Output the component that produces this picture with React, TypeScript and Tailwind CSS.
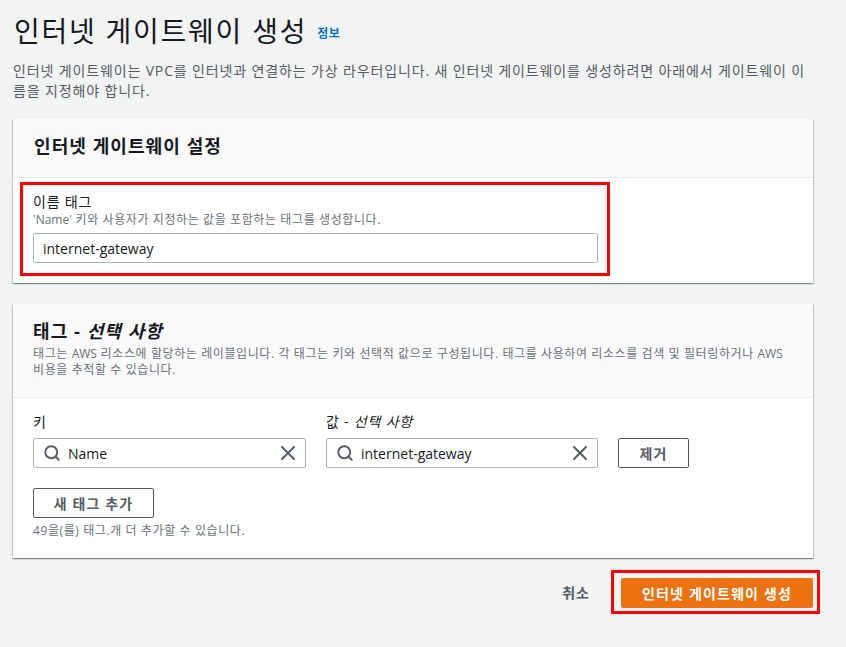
import React from 'react';
import { Search, X } from 'lucide-react';

const font = "font-['Open_Sans','Noto_Sans_CJK_KR',sans-serif]";

function TagInput({ value, className }: { value: string; className: string }) {
  return (
    <div className={`flex h-[30px] items-center rounded-[2px] border border-[#aab7b8] bg-white pl-[9px] pr-[5px] ${className}`}>
      <Search className="h-[18px] w-[18px] shrink-0 text-[#545b64]" strokeWidth={2.5} />
      <span className="ml-[7px] flex-1 text-[14px] text-[#16191f]">{value}</span>
      <X className="h-[24px] w-[24px] shrink-0 text-[#545b64]" strokeWidth={2} />
    </div>
  );
}

export default function App() {
  return (
    <div className={`${font} h-[647px] w-[846px] overflow-hidden bg-[#f2f3f3] pl-[13px]`}>
      <div className="w-[800px]">
        <div className="flex items-center pt-[11px]">
          <h1 className="ml-[1px] text-[28px] leading-[40px] font-normal tracking-[1.75px] text-[#16191f]">인터넷 게이트웨이 생성</h1>
          <a className="ml-[10px] mt-[6px] text-[12px] font-bold tracking-[0.5px] text-[#0073bb]">정보</a>
        </div>
        <p className="mt-[10px] text-[14px] leading-[20px] tracking-[0.86px] text-[#545b64]">
          인터넷 게이트웨이는 VPC를 인터넷과 연결하는 가상 라우터입니다. 새 인터넷 게이트웨이를 생성하려면 아래에서 게이트웨이 이름을 지정해야 합니다.
        </p>

        {/* Settings */}
        <section className="mt-[18px] h-[164px] bg-white shadow-[0_1px_1px_0_rgba(0,28,36,0.3),1px_1px_1px_0_rgba(0,28,36,0.15),-1px_1px_1px_0_rgba(0,28,36,0.15)]">
          <div className="flex h-[59px] items-center border-b border-[#eaeded] bg-[#fafafa] px-[21px] pb-[4px]">
            <h2 className="text-[18px] leading-[24px] font-bold tracking-[1.08px] text-[#16191f]">인터넷 게이트웨이 설정</h2>
          </div>
          <div className="ml-[7px] mt-[4px] h-[94px] w-[590px] border-[3px] border-[#ff0000] pl-[10px] pr-[9px] pt-[7px]">
            <div className="text-[14px] leading-[20px] tracking-[0.8px] text-[#16191f]">이름 태그</div>
            <div className="text-[12px] leading-[16px] tracking-[0.6px] text-[#687078]">
              <span className="tracking-normal">'Name'</span> 키와 사용자가 지정하는 값을 포함하는 태그를 생성합니다.
            </div>
            <div className="mt-[5px] flex h-[30px] items-center rounded-[2px] border border-[#aab7b8] bg-white px-[9px] text-[14px] text-[#16191f]">
              internet-gateway
            </div>
          </div>
        </section>

        {/* Tags */}
        <section className="mt-[21px] h-[254px] bg-white shadow-[0_1px_1px_0_rgba(0,28,36,0.3),1px_1px_1px_0_rgba(0,28,36,0.15),-1px_1px_1px_0_rgba(0,28,36,0.15)]">
          <div className="h-[94px] border-b border-[#eaeded] bg-[#fafafa] px-[20px] pt-[15px]">
            <h2 className="text-[18px] leading-[24px] font-bold tracking-[1.08px] text-[#16191f]">
              태그 - <i>선택 사항</i>
            </h2>
            <p className="mt-[3px] text-[12px] leading-[16px] tracking-[0.6px] text-[#687078]">
              태그는 <span className="tracking-normal">AWS</span> 리소스에 할당하는 레이블입니다. 각 태그는 키와 선택적 값으로 구성됩니다. 태그를 사용하여 리소스를 검색 및 필터링하거나 <span className="tracking-normal">AWS</span> 비용을 추적할 수 있습니다.
            </p>
          </div>
          <div className="px-[20px] pt-[14px]">
            <div className="flex items-end">
              <div className="w-[273px]">
                <div className="mb-[6px] text-[14px] leading-[20px] text-[#16191f]">키</div>
                <TagInput value="Name" className="w-[273px]" />
              </div>
              <div className="ml-[20px] w-[272px]">
                <div className="mb-[6px] text-[14px] leading-[20px] tracking-[0.8px] text-[#16191f]">
                  값 - <i>선택 사항</i>
                </div>
                <TagInput value="internet-gateway" className="w-[272px]" />
              </div>
              <button className="ml-[20px] h-[30px] w-[71px] rounded-[2px] border border-[#545b64] bg-white text-[14px] font-bold tracking-[1px] text-[#545b64]">
                제거
              </button>
            </div>
            <button className="mt-[20px] block h-[30px] w-[121px] rounded-[2px] border border-[#545b64] bg-white text-[14px] font-bold tracking-[1.1px] text-[#545b64]">
              새 태그 추가
            </button>
            <p className="mt-[5px] text-[12px] leading-[16px] tracking-[0.6px] text-[#687078]">49을(를) 태그.개 더 추가할 수 있습니다.</p>
          </div>
        </section>

        {/* Actions */}
        <div className="mt-[12px] -mr-[7px] flex items-center justify-end">
          <span className="mr-[21px] text-[14px] font-bold tracking-[1px] text-[#545b64]">취소</span>
          <div className="h-[44px] w-[209px] border-[3px] border-[#ff0000] pl-[7px] pr-[4px] pt-[5px]">
            <button className="h-[30px] w-full rounded-[2px] bg-[#ec7211] text-[14px] font-bold tracking-[1.17px] text-white">
              인터넷 게이트웨이 생성
            </button>
          </div>
        </div>
      </div>
    </div>
  );
}
